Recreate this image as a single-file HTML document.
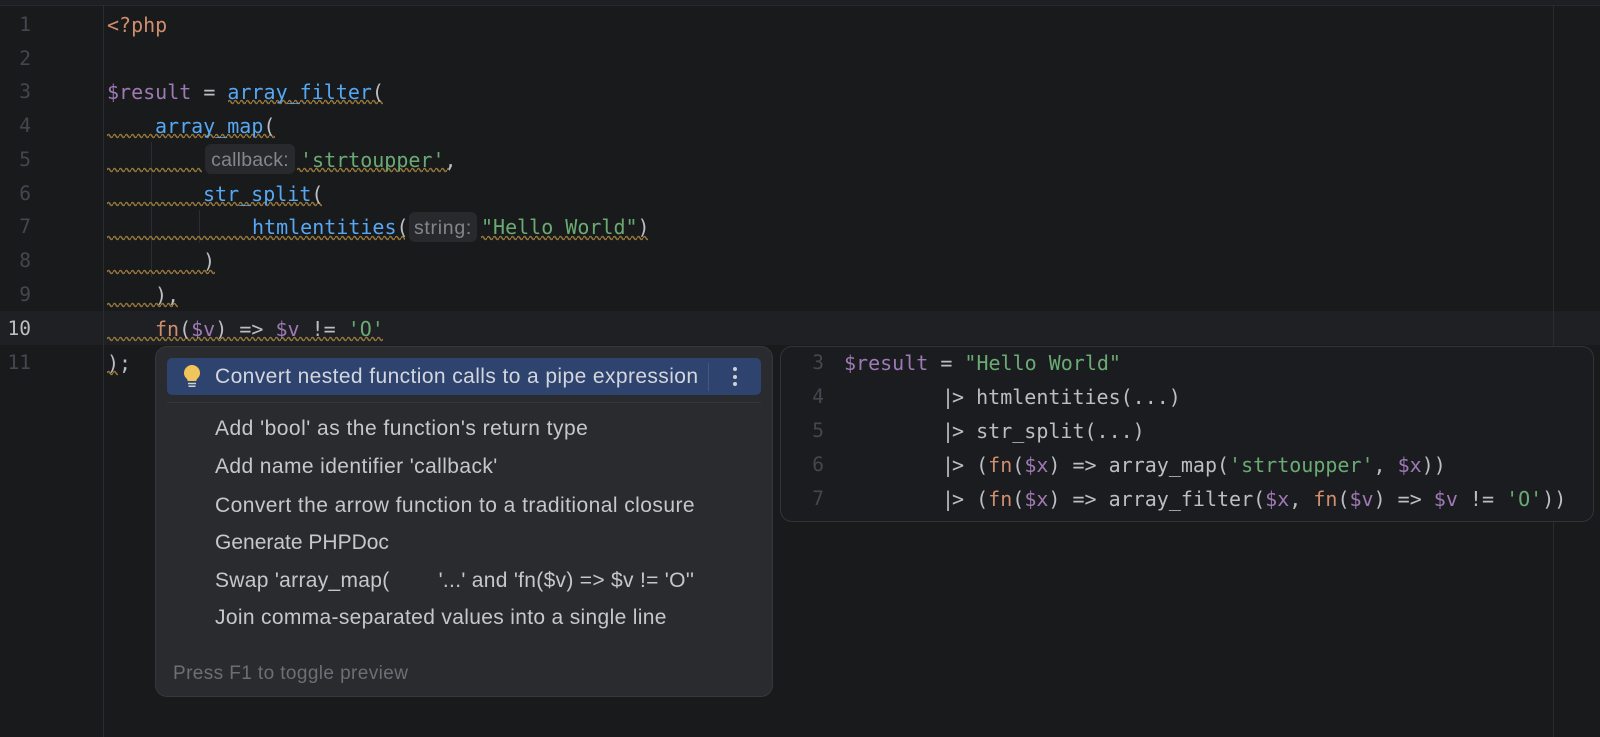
<!DOCTYPE html>
<html><head><meta charset="utf-8"><style>
html,body{margin:0;padding:0;background:#191a1c}
#r{position:relative;width:1600px;height:737px;overflow:hidden;background:#191a1c;font-family:"DejaVu Sans Mono","Liberation Mono",monospace;color:#bcbec4}
#r div{position:absolute}
.c{font-size:20px;line-height:34px;height:34px;white-space:pre;font-family:"DejaVu Sans Mono","Liberation Mono",monospace;color:#bcbec4}
.n{font-size:19.5px;line-height:34px;height:34px;color:#43474f;text-align:right;width:31px;left:0}
.f{color:#56a8f5}.v{color:#9f79b5}.s{color:#6aab73}.k{color:#cf8e6d}
.p{position:relative;left:2px}
.h{background:#27292c;border-radius:6px;color:#83868d;font:19.5px/32px "Liberation Sans",sans-serif;letter-spacing:.2px;text-align:center}
.i{font:21px/30px "Liberation Sans",sans-serif;letter-spacing:.4px;color:#c5c7cc;left:215px;white-space:pre;height:30px}
</style></head><body><div id="r">
<div style="left:0;top:0;width:1600px;height:5px;background:#1e1f22;border-bottom:1px solid #27282c"></div>
<div style="left:0;top:311px;width:1600px;height:34px;background:#1f2024"></div>
<div style="left:103px;top:6px;width:1px;height:731px;background:#2b2c30"></div>
<div style="left:1553px;top:6px;width:1px;height:731px;background:#2b2c30"></div>
<div style="left:151px;top:142px;width:1px;height:135px;background:#2c2d31"></div>
<div style="left:199px;top:210px;width:1px;height:33px;background:#2c2d31"></div>

<svg width="1600" height="737" style="position:absolute;left:0;top:0">
<defs><pattern id="w" x="0" y="0" width="6" height="6" patternUnits="userSpaceOnUse"><path d="M0 3 Q1.5 0 3 3 T6 3" fill="none" stroke="#94753a" stroke-width="1.5"/></pattern></defs>
<g fill="url(#w)">
<rect transform="translate(228,99)" width="155" height="6"/>
<rect transform="translate(107,133)" width="168" height="6"/>
<rect transform="translate(107,167)" width="95" height="6"/>
<rect transform="translate(297,167)" width="153" height="6"/>
<rect transform="translate(107,201)" width="215" height="6"/>
<rect transform="translate(107,235)" width="298" height="6"/>
<rect transform="translate(481,235)" width="167" height="6"/>
<rect transform="translate(107,269)" width="108" height="6"/>
<rect transform="translate(107,302)" width="71" height="6"/>
<rect transform="translate(107,336)" width="276" height="6"/>
<rect transform="translate(107,370)" width="11" height="6"/>
</g></svg>

<div class="n" style="top:8px">1</div>
<div class="n" style="top:42px">2</div>
<div class="n" style="top:75px">3</div>
<div class="n" style="top:109px">4</div>
<div class="n" style="top:143px">5</div>
<div class="n" style="top:177px">6</div>
<div class="n" style="top:210px">7</div>
<div class="n" style="top:244px">8</div>
<div class="n" style="top:278px">9</div>
<div class="n" style="top:312px;color:#bcbec4">10</div>
<div class="n" style="top:346px">11</div>

<div class="c k" style="left:107px;top:8px">&lt;?php</div>
<div class="c" style="left:107px;top:75px"><span class="v">$result</span> = <span class="f">array_filter</span>(</div>
<div class="c" style="left:155px;top:109px"><span class="f">array_map</span>(</div>
<div class="h" style="left:205px;top:144px;width:90px;height:30px">callback:</div>
<div class="c s" style="left:300px;top:143px">'strtoupper'<span style="color:#bcbec4">,</span></div>
<div class="c" style="left:203px;top:177px"><span class="f">str_split</span>(</div>
<div class="c" style="left:252px;top:210px"><span class="f">htmlentities</span>(</div>
<div class="h" style="left:409px;top:212px;width:68px;height:30px;letter-spacing:.7px">string:</div>
<div class="c" style="left:481px;top:210px"><span class="s">"Hello World"</span>)</div>
<div class="c" style="left:203px;top:244px">)</div>
<div class="c" style="left:155px;top:278px">),</div>
<div class="c" style="left:155px;top:312px"><span class="k">fn</span>(<span class="v">$v</span>) =&gt; <span class="v">$v</span> != <span class="s">'O'</span></div>
<div class="c" style="left:107px;top:346px">);</div>

<div style="left:155px;top:346px;width:616px;height:349px;background:#2a2b2f;border:1px solid #35373b;border-radius:12px"></div>
<div style="left:167px;top:358px;width:594px;height:37px;background:#2e436e;border-radius:5px"></div>
<svg width="24" height="30" style="position:absolute;left:180px;top:362px">
<path d="M12 3a8 8 0 0 0-8 8c0 2.6 1.2 4.2 2.4 5.4.8.9 1.2 1.7 1.3 2.6h8.6c.1-.9.5-1.7 1.3-2.6C18.800 15.200 20 13.600 20 11a8 8 0 0 0-8-8z" fill="#f2c55c"/>
<path d="M8 21.500h8M8.500 24.300h7" stroke="#ced0d6" stroke-width="1.5" fill="none"/>
</svg>
<div class="i" style="top:362px;color:#d3d6dd">Convert nested function calls to a pipe expression</div>
<div style="left:708px;top:363px;width:1px;height:28px;background:#44587f"></div>
<div style="left:733px;top:367px;width:4px;height:4px;border-radius:2px;background:#ced0d6"></div>
<div style="left:733px;top:375px;width:4px;height:4px;border-radius:2px;background:#ced0d6"></div>
<div style="left:733px;top:382px;width:4px;height:4px;border-radius:2px;background:#ced0d6"></div>
<div style="left:167px;top:402px;width:594px;height:1px;background:#35373b"></div>
<div class="i" style="top:414px;letter-spacing:.48px">Add 'bool' as the function's return type</div>
<div class="i" style="top:452px">Add name identifier 'callback'</div>
<div class="i" style="top:491px;letter-spacing:.44px">Convert the arrow function to a traditional closure</div>
<div class="i" style="top:528px;letter-spacing:0">Generate PHPDoc</div>
<div class="i" style="top:566px;letter-spacing:.3px">Swap 'array_map(        '...' and 'fn($v) =&gt; $v != 'O''</div>
<div class="i" style="top:603px;letter-spacing:.33px">Join comma-separated values into a single line</div>
<div class="i" style="top:659px;left:173px;color:#6b6f76;font-size:19px">Press F1 to toggle preview</div>

<div style="left:780px;top:346px;width:812px;height:174px;background:#1b1c1f;border:1px solid #323337;border-radius:12px"></div>
<div class="n" style="left:790px;width:34px;top:346px">3</div>
<div class="n" style="left:790px;width:34px;top:380px">4</div>
<div class="n" style="left:790px;width:34px;top:414px">5</div>
<div class="n" style="left:790px;width:34px;top:448px">6</div>
<div class="n" style="left:790px;width:34px;top:482px">7</div>
<div class="c" style="left:844px;top:346px"><span class="v">$result</span> = <span class="s">"Hello World"</span></div>
<div class="c" style="left:940px;top:380px"><span class="p">|</span>&gt; htmlentities(...)</div>
<div class="c" style="left:940px;top:414px"><span class="p">|</span>&gt; str_split(...)</div>
<div class="c" style="left:940px;top:448px"><span class="p">|</span>&gt; (<span class="k">fn</span>(<span class="v">$x</span>) =&gt; array_map(<span class="s">'strtoupper'</span>, <span class="v">$x</span>))</div>
<div class="c" style="left:940px;top:482px"><span class="p">|</span>&gt; (<span class="k">fn</span>(<span class="v">$x</span>) =&gt; array_filter(<span class="v">$x</span>, <span class="k">fn</span>(<span class="v">$v</span>) =&gt; <span class="v">$v</span> != <span class="s">'O'</span>))</div>
</div></body></html>
